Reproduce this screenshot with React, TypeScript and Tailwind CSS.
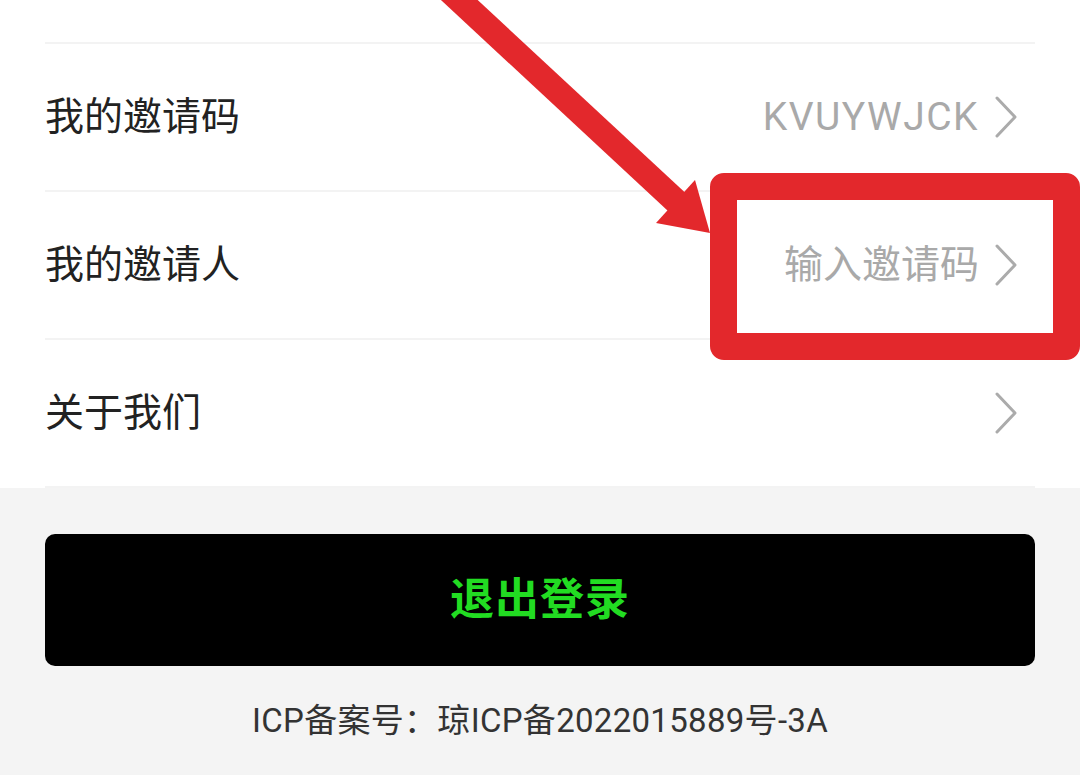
import React from 'react';

const ChevronRight: React.FC = () => (
  <svg width="26" height="42" viewBox="0 0 26 42" className="shrink-0">
    <path d="M4 2 L22 21 L4 40" fill="none" stroke="#ababab" strokeWidth="3" strokeLinecap="round" strokeLinejoin="round" />
  </svg>
);

interface RowProps {
  label: string;
  value?: string;
  latin?: boolean;
}

const Row: React.FC<RowProps> = ({ label, value, latin }) => (
  <div className="h-[148px] flex items-center justify-between border-b-2 border-[#f3f3f3]">
    <span className="text-[39px] leading-none text-[#222222]">{label}</span>
    <div className="flex items-center gap-[14px] mr-[16px]">
      {value && (
        <span className={`text-[39px] leading-none text-[#a9a9a9] ${latin ? 'tracking-[1.5px]' : ''}`}>{value}</span>
      )}
      <ChevronRight />
    </div>
  </div>
);

// annotation arrow (drawn over the page)
const Arrow: React.FC = () => (
  <svg className="absolute left-0 top-0 pointer-events-none" width="1080" height="775" viewBox="0 0 1080 775">
    <line x1="441" y1="-17" x2="680" y2="205" stroke="#e3282c" strokeWidth="25" />
    <polygon points="710,233 656,223 695,180" fill="#e3282c" />
  </svg>
);

const App: React.FC = () => {
  return (
    <div className="relative w-[1080px] h-[775px] overflow-hidden bg-[#f4f4f4] font-['Roboto','Noto_Sans_CJK_SC',sans-serif]">
      {/* 列表 */}
      <div className="bg-white px-[45px]">
        <div className="h-[44px] border-b-2 border-[#f3f3f3]" />
        <Row label="我的邀请码" value="KVUYWJCK" latin />
        <Row label="我的邀请人" value="输入邀请码" />
        <Row label="关于我们" />
      </div>

      {/* 退出 */}
      <div className="px-[45px] pt-[46px]">
        <button className="w-full h-[132px] bg-black rounded-[10px] flex items-center justify-center">
          <span className="text-[44px] font-bold text-[#22dc22] tracking-[1px]">退出登录</span>
        </button>
        <p className="mt-[35px] text-center text-[33px] leading-[40px] tracking-[0.3px] text-[#333333]">
          ICP备案号：琼ICP备2022015889号-3A
        </p>
      </div>

      {/* 标注 */}
      <div className="absolute left-[710px] top-[173px] w-[370px] h-[187px] border-[27px] border-[#e3282c] rounded-[14px]" />
      <Arrow />
    </div>
  );
};

export default App;
